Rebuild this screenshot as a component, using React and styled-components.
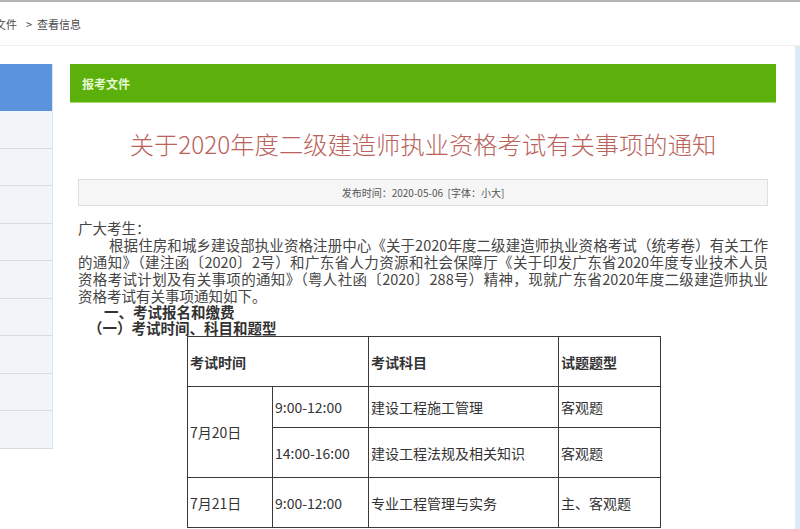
import React from "react";
import styled, { createGlobalStyle } from "styled-components";

const GlobalStyle = createGlobalStyle`
  html, body {
    margin: 0;
    padding: 0;
    height: 529px;
    overflow: hidden;
    background: #ffffff;
    font-family: "Noto Sans CJK SC", "Noto Sans", sans-serif;
  }
`;

const Page = styled.div`
  width: 800px;
  height: 529px;
  overflow: hidden;
  border-top: 2px solid #b4b4b4;
  box-sizing: border-box;
`;

const Crumbs = styled.div`
  height: 43px;
  display: flex;
  align-items: center;
  font-size: 11px;
  color: #4a4a4a;
  border-bottom: 1px solid #eeeeee;
`;

const CrumbItem = styled.span`
  margin-left: ${(p) => p.$offset || 0}px;
`;

const CrumbSep = styled.span`
  margin: 0 5px 0 9px;
`;

const Body = styled.div`
  display: flex;
  align-items: flex-start;
`;

const Sidebar = styled.aside`
  width: 53px;
  flex-shrink: 0;
  margin-top: 18px;
  border-right: 1px solid #dfe4ea;
  box-sizing: border-box;
`;

const SideHead = styled.div`
  height: 47px;
  background: #5b94dc;
`;

const SideItem = styled.div`
  height: 36.5px;
  background: #f1f4f8;
  border-bottom: 1px solid #d7dce3;
`;

const Main = styled.main`
  flex: 1;
  padding: 18px 19px 0 17px;
  border-right: 5px solid #dcebf4;
  min-height: 500px;
`;

const SectionBar = styled.div`
  height: 39px;
  background: #5cb00c;
  border-bottom: 1px solid #a8d870;
  box-sizing: border-box;
  display: flex;
  align-items: center;
  padding-left: 12px;
  font-size: 12px;
  font-weight: 700;
  color: #e6f8cf;
`;

const Title = styled.h1`
  margin: 26px 0 0;
  font-size: 24.3px;
  line-height: 30px;
  font-weight: 300;
  text-align: center;
  color: #bb625a;
`;

const Content = styled.div`
  padding: 0 8px;
`;

const Meta = styled.div`
  margin-top: 20px;
  height: 27px;
  background: #f6f6f6;
  border: 1px solid #dedede;
  box-sizing: border-box;
  display: flex;
  align-items: center;
  justify-content: center;
  font-size: 10px;
  color: #555555;
`;

const Text = styled.div`
  margin-top: 13px;
  font-size: 14.5px;
  line-height: 17px;
  color: #454545;
`;

const Line = styled.div`
  white-space: nowrap;
  text-align: ${(p) => (p.$full ? "justify" : "left")};
  text-align-last: ${(p) => (p.$full ? "justify" : "left")};
  padding-left: ${(p) => p.$indent || 0}px;
`;

const Heading = styled.div`
  font-size: 14.5px;
  line-height: 16px;
  font-weight: 700;
  color: #333333;
  padding-left: ${(p) => p.$indent}px;
`;

const Table = styled.table`
  margin: 0 0 0 109px;
  border-collapse: collapse;
  font-size: 14px;
  color: #333333;
  td, th {
    border: 1px solid #3a3a3a;
    padding: 0 0 0 2px;
    text-align: left;
    vertical-align: middle;
  }
  th {
    font-weight: 700;
    height: 49px;
  }
`;

const Row = styled.tr`
  td {
    height: ${(p) => p.$h}px;
  }
`;

const After = styled.div`
  margin-top: 6px;
  padding-left: 22px;
  font-size: 14.5px;
  line-height: 17px;
  color: #888888;
`;

const App = () => {
  return (
    <>
      <GlobalStyle />
      <Page>
        <Crumbs>
          <CrumbItem $offset={-5}>文件</CrumbItem>
          <CrumbSep>&gt;</CrumbSep>
          <CrumbItem>查看信息</CrumbItem>
        </Crumbs>
        <Body>
          <Sidebar>
            <SideHead />
            {Array.from({ length: 9 }).map((_, i) => (
              <SideItem key={i} />
            ))}
          </Sidebar>
          <Main>
            <SectionBar>报考文件</SectionBar>
            <Title>关于2020年度二级建造师执业资格考试有关事项的通知</Title>
            <Content>
              <Meta>发布时间：2020-05-06&nbsp;&nbsp;[字体：小大]</Meta>
              <Text>
                <Line>广大考生：</Line>
                <Line $full $indent={31}>
                  根据住房和城乡建设部执业资格注册中心《关于2020年度二级建造师执业资格考试（统考卷）有关工作
                </Line>
                <Line $full>
                  的通知》（建注函〔2020〕2号）和广东省人力资源和社会保障厅《关于印发广东省2020年度专业技术人员
                </Line>
                <Line $full>
                  资格考试计划及有关事项的通知》（粤人社函〔2020〕288号）精神，现就广东省2020年度二级建造师执业
                </Line>
                <Line>资格考试有关事项通知如下。</Line>
              </Text>
              <Heading $indent={26}>一、考试报名和缴费</Heading>
              <Heading $indent={10}>（一）考试时间、科目和题型</Heading>
              <Table>
                <colgroup>
                  <col style={{ width: 85 }} />
                  <col style={{ width: 96 }} />
                  <col style={{ width: 190 }} />
                  <col style={{ width: 102 }} />
                </colgroup>
                <thead>
                  <tr>
                    <th colSpan={2}>考试时间</th>
                    <th>考试科目</th>
                    <th>试题题型</th>
                  </tr>
                </thead>
                <tbody>
                  <Row $h={40}>
                    <td rowSpan={2}>7月20日</td>
                    <td>9:00-12:00</td>
                    <td>建设工程施工管理</td>
                    <td>客观题</td>
                  </Row>
                  <Row $h={49}>
                    <td>14:00-16:00</td>
                    <td>建设工程法规及相关知识</td>
                    <td>客观题</td>
                  </Row>
                  <Row $h={49}>
                    <td>7月21日</td>
                    <td>9:00-12:00</td>
                    <td>专业工程管理与实务</td>
                    <td>主、客观题</td>
                  </Row>
                </tbody>
              </Table>
              <After>（二）报名时间和方式</After>
            </Content>
          </Main>
        </Body>
      </Page>
    </>
  );
};

export default App;
